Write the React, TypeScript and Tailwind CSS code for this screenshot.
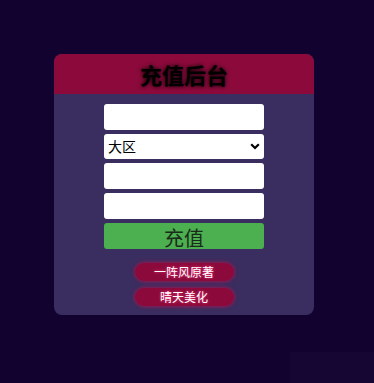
export default function App() {
  return (
    <div className="relative h-[383px] w-[374px] overflow-hidden bg-[#120230] font-['Microsoft_YaHei','Noto_Sans_CJK_SC',sans-serif]">
      <div className="absolute left-[54px] top-[54px] w-[260px] overflow-hidden rounded-[8px] bg-[#3a2d5f]">
        <div className="flex h-[40px] items-center justify-center bg-[#8c0a3b]">
          <h1 className="text-[22px] font-bold leading-none text-black [text-shadow:0_0_4px_#000]">充值后台</h1>
        </div>
        <div className="flex flex-col items-center pb-[9px] pt-[10px]">
          <div className="flex w-[160px] flex-col gap-[4px]">
            <input className="h-[26px] rounded-[3px] bg-white px-1 text-[13px] outline-none" />
            <div className="relative h-[25px] rounded-[3px] bg-white">
              <span className="absolute left-[4px] top-[3px] text-[14px] leading-[18px] text-black">大区</span>
              <svg className="absolute right-[4px] top-[9px]" width="10" height="7" viewBox="0 0 10 7">
                <path d="M1.2 1.2 L5 5 L8.8 1.2" fill="none" stroke="#000" strokeWidth="2.2" />
              </svg>
            </div>
            <input className="h-[26px] rounded-[3px] bg-white px-1 text-[13px] outline-none" />
            <input className="h-[26px] rounded-[3px] bg-white px-1 text-[13px] outline-none" />
            <button className="h-[26px] rounded-[3px] bg-[#4caf50] pt-[2px] text-[20px] leading-[26px] text-[#1b2b1b]">充值</button>
          </div>
          <div className="mt-[14px] flex flex-col items-center gap-[7px]">
            <a className="flex h-[18px] w-[99px] items-center justify-center rounded-full bg-[#8c0a3b] text-[12px] text-white shadow-[0_0_4px_#c0104f] [text-shadow:0_0_3px_#ff3d8a]">一阵风原著</a>
            <a className="flex h-[18px] w-[99px] items-center justify-center rounded-full bg-[#8c0a3b] text-[12px] text-white shadow-[0_0_4px_#c0104f] [text-shadow:0_0_3px_#ff3d8a]">晴天美化</a>
          </div>
        </div>
      </div>
      <div className="absolute left-[290px] top-[352px] h-[31px] w-[84px] bg-[#160634]" />
    </div>
  );
}
